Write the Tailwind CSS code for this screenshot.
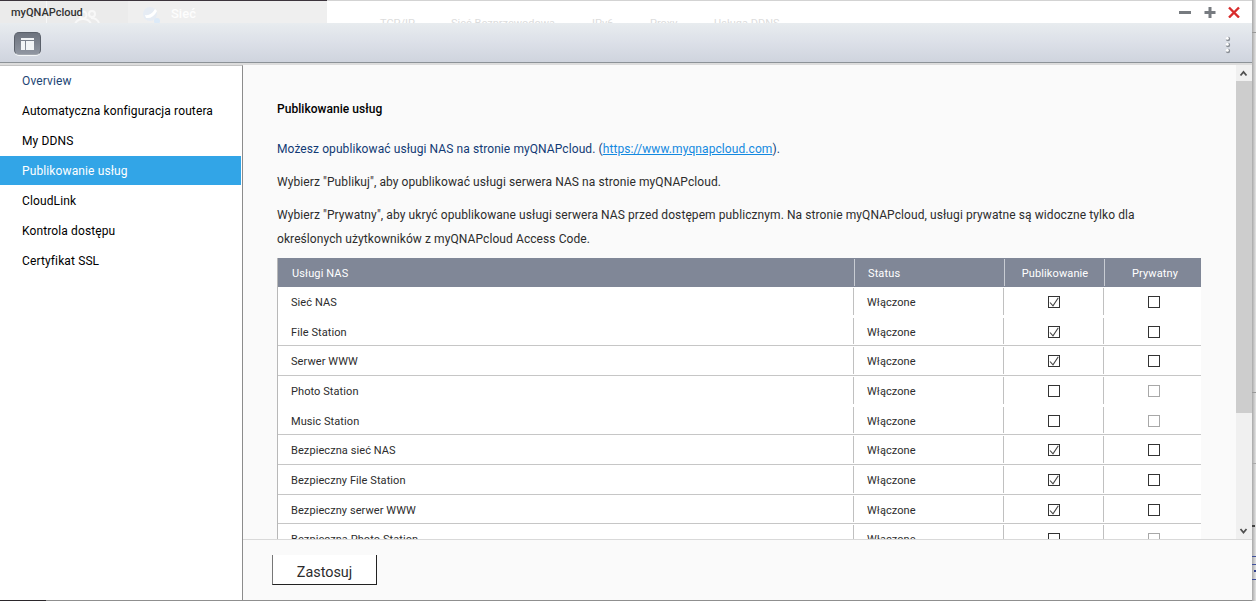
<!DOCTYPE html>
<html lang="pl">
<head>
    <meta charset="UTF-8" />
    <title>myQNAPcloud</title>
    <script src="https://cdn.jsdelivr.net/npm/@tailwindcss/browser@4"></script>
</head>
<body class="relative w-[1256px] h-[601px] overflow-hidden bg-[#dcdcdc] font-[Roboto,sans-serif] text-xs text-[#2c2c2c]">

    <!-- DESKTOP BEHIND THE WINDOW -->
    <div class="absolute right-0 top-0 w-1 h-full bg-linear-to-r from-[#a8a8a8] to-[#e6e6e6]">
        <div class="absolute top-8 w-1 h-px bg-[#999]"></div>
        <div class="absolute top-[392px] w-1 h-px bg-[#999]"></div>
        <div class="absolute top-[463px] w-1 h-px bg-[#aaa]"></div>
        <div class="absolute top-[525px] w-[3px] h-0.5 bg-[#444]"></div>
        <div class="absolute top-[556px] w-1 h-px bg-[#3f4f9c]"></div>
        <div class="absolute top-[564px] w-1 h-px bg-[#3f4f9c]"></div>
        <div class="absolute top-[570px] left-0.5 w-0.5 h-0.5 bg-[#2f3f8c]"></div>
        <div class="absolute top-[579px] w-1 h-px bg-[#3f4f9c]"></div>
    </div>

    <!-- WINDOW -->
    <div class="relative flex flex-col w-[1252px] h-[601px] bg-white">

        <!-- TITLE BAR -->
        <div class="relative flex items-center justify-between h-[23px] shrink-0 border-t border-[#d3d3d3] bg-white pl-[11px] pr-3 overflow-hidden">
            <div class="absolute top-0 left-0 w-[327px] h-[22px] bg-[#efefef]">
                <div class="absolute left-0 top-0 w-[128px] h-[22px] bg-[#ebebeb]"></div>
                <div class="absolute left-[46px] top-0 w-px h-[22px] bg-[#f8f8f8]"></div>
                <svg class="absolute left-[74px] top-2 w-7 h-4" viewBox="0 0 28 16" fill="none" stroke="#f8f8f8" stroke-width="2">
                    <circle cx="9" cy="6" r="3.5"/><circle cx="18" cy="5" r="3"/><path d="M1 15q2-5 8-5t8 5M17 9q6 0 8 5"/>
                </svg>
                <svg class="absolute left-[142px] top-1.5 w-[18px] h-[17px]" viewBox="0 0 18 17">
                    <circle cx="8" cy="7" r="7" fill="#e6ecf4"/><path d="M3 8q6 1 10-6l2 2q-4 8-11 7z" fill="#fff"/><circle cx="15" cy="14" r="3" fill="#dceaf8"/>
                </svg>
                <span class="absolute left-[171px] top-[5px] text-[13px] leading-4 font-medium text-[#fdfdfd]">Sieć</span>
            </div>
            <div class="absolute left-0 top-[15px] h-4 text-[11px] leading-4 text-[#dcdcdc] whitespace-nowrap">
                <span class="absolute left-[380px]">TCP/IP</span>
                <span class="absolute left-[451px]">Sieć Bezprzewodowa</span>
                <span class="absolute left-[592px]">IPv6</span>
                <span class="absolute left-[650px]">Proxy</span>
                <span class="absolute left-[714px]">Usługa DDNS</span>
            </div>
            <span class="relative pt-0.5 text-[11px] font-medium text-[#333]">myQNAPcloud</span>
            <div class="relative flex items-center gap-3">
                <svg class="w-3 h-3" viewBox="0 0 12 12"><path d="M0 6.5h12" stroke="#777b80" stroke-width="3"/></svg>
                <svg class="w-3 h-3 ml-px" viewBox="0 0 12 12"><path d="M.5 6.5h11M6 1v11" stroke="#777b80" stroke-width="3"/></svg>
                <svg class="w-3 h-3" viewBox="0 0 12 12"><path d="M1 1.500l10 10M11 1.500l-10 10" stroke="#d82c2c" stroke-width="2.400"/></svg>
            </div>
        </div>
        <div class="absolute left-0 top-0 w-[327px] h-px bg-[#3c343c]"></div>

        <!-- TOOLBAR -->
        <div class="flex items-center justify-between h-10 shrink-0 border-b border-[#8c9297] bg-linear-to-b from-[#e8ecef] via-[#dce0e8] to-[#cfd4de] pl-3.5 pr-[21px]">
            <div class="flex items-center justify-center w-[27px] h-[23px] mt-0.5 rounded-[5px] border border-[#5a606a] border-b-[#a0a5ac] bg-linear-to-b from-[#6d737e] to-[#9096a1] shadow-[0_1px_0_#f4f6f8]">
                <svg class="w-[13px] h-3" viewBox="0 0 13 12" fill="#f2f4f6"><path d="M0 0h13v2H0zM0 3h4v9H0zM5 3h8v9H5z"/></svg>
            </div>
            <svg class="w-[6px] h-[18px] mt-1" viewBox="0 0 6 18">
                <g fill="#8b9097"><circle cx="3" cy="3" r="2.200"/><circle cx="3" cy="9" r="2.200"/><circle cx="3" cy="15" r="2.200"/></g>
                <g fill="#fff"><circle cx="2.300" cy="2.200" r="1.500"/><circle cx="2.300" cy="8.200" r="1.500"/><circle cx="2.300" cy="14.200" r="1.500"/></g>
            </svg>
        </div>
        <div class="h-0.5 shrink-0 bg-[#dcdcdc]"></div>

        <div class="flex flex-1 min-h-0 border-b border-[#8f8f8f]">
            <!-- MENU -->
            <ul class="w-[243px] shrink-0 border-t border-t-[#c4c4c4] border-r border-r-[#8c8c8c] bg-white text-black leading-[31px] tracking-[0.12px] [&>li]:h-[29px] [&>li]:mb-px [&>li]:pl-[22px] [&>li]:mr-px">
                <li class="text-[#1c4574]">Overview</li>
                <li>Automatyczna konfiguracja routera</li>
                <li>My DDNS</li>
                <li class="bg-[#32a5e7] text-white">Publikowanie usług</li>
                <li>CloudLink</li>
                <li>Kontrola dostępu</li>
                <li>Certyfikat SSL</li>
            </ul>

            <div class="flex flex-col flex-1 min-w-0 bg-[#fafafa]">
                <div class="flex h-[474px] shrink-0 overflow-hidden">
                    <!-- CONTENT -->
                    <div class="w-[924px] ml-[34px] mr-[35px] pt-8 leading-6 tracking-[0.085px]">
                        <h2 class="font-medium text-black tracking-[0.04px]">Publikowanie usług</h2>
                        <p class="mt-4 text-[#123a75]">Możesz opublikować usługi NAS na stronie myQNAPcloud. (<a href="#" class="text-[#1389e0] underline">https://www.myqnapcloud.com</a>).</p>
                        <p class="mt-[9px]">Wybierz "Publikuj", aby opublikować usługi serwera NAS na stronie myQNAPcloud.</p>
                        <p class="mt-[9px]">Wybierz "Prywatny", aby ukryć opublikowane usługi serwera NAS przed dostępem publicznym. Na stronie myQNAPcloud, usługi prywatne są widoczne tylko dla<br>określonych użytkowników z myQNAPcloud Access Code.</p>

                        <div class="mt-[7px] border-l border-[#b8b8b8] bg-white text-[11px]">
                            <div class="grid grid-cols-[576px_150px_100px_97px] grid-rows-1 h-[29px] bg-[#808797] text-white leading-[31px] tracking-[0.12px]">
                                <div class="pl-3.5">Usługi NAS</div>
                                <div class="pl-[13px] my-px border-l border-[#c8ccd3] leading-[29px]">Status</div>
                                <div class="pl-px my-px border-l border-[#c8ccd3] leading-[29px] text-center">Publikowanie</div>
                                <div class="pl-1 my-px border-l border-[#c8ccd3] leading-[29px] text-center">Prywatny</div>
                            </div>
                            <div id="rows" class="leading-[31px] tracking-[0.08px]"></div>
                        </div>
                    </div>

                    <!-- SCROLLBAR -->
                    <div class="flex flex-col items-center w-4 bg-[#f0f0f0]">
                        <svg class="w-4 h-4 shrink-0" viewBox="0 0 16 16" fill="none" stroke="#505050" stroke-width="1.800"><path d="M4.500 10.500L7.500 7l3 3.500"/></svg>
                        <div class="w-full h-[332px] bg-[#cdcdcd]"></div>
                        <svg class="w-4 h-4 shrink-0 mt-auto" viewBox="0 0 16 16" fill="none" stroke="#505050" stroke-width="1.800"><path d="M4.500 6l3 3.500 3-3.500"/></svg>
                    </div>
                </div>

                <!-- FOOTER -->
                <div class="flex-1 border-t border-[#d9d9d9] pl-[29px] pt-[15px]">
                    <button class="w-[105px] h-[30px] border-l border-r border-b border-[#222] border-l-[#777] bg-white pt-0.5 text-[14.4px] leading-8">Zastosuj</button>
                </div>
            </div>
        </div>
        <div class="absolute left-0 bottom-0 w-[46px] h-px bg-[#2b272b]"></div>
    </div>

    <script>
        // name, row classes, published (1/0)
        let services = [
            ["Sieć NAS", "h-[29px]", 1],
            ["File Station", "h-[30px] pt-px border-b", 1],
            ["Serwer WWW", "h-[30px] border-b", 1],
            ["Photo Station", "h-[29px]", 0],
            ["Music Station", "h-[30px] pt-px border-b", 0],
            ["Bezpieczna sieć NAS", "h-[30px] border-b", 1],
            ["Bezpieczny File Station", "h-[30px] border-b", 1],
            ["Bezpieczny serwer WWW", "h-[29px] border-b", 1],
            ["Bezpieczna Photo Station", "h-[30px]", 0]
        ];

        let check = '<svg class="w-2.5 h-2.5" viewBox="0 0 10 10" fill="none" stroke="#444" stroke-width="1.100"><path d="M1 5.500L4 8.800 9.300 0.800"/></svg>';

        document.getElementById("rows").innerHTML = services.map(([name, size, on]) => `
            <div class="grid grid-cols-[575px_150px_100px_98px] grid-rows-1 ${size} border-[#c6c6c6]">
                <div class="pl-[13px]">${name}</div>
                <div class="my-px pl-[13px] border-l border-[#c0c0c0] leading-[29px]">Włączone</div>
                <div class="my-px pt-[8px] pl-11 border-l border-[#c0c0c0]"><div class="w-3 h-3 border border-[#333]">${on ? check : ""}</div></div>
                <div class="my-px pt-[8px] pl-11 border-l border-[#c0c0c0]"><div class="w-3 h-3 border ${on ? "border-[#333]" : "border-[#a8a8a8]"}"></div></div>
            </div>`).join("");
    </script>
</body>
</html>
